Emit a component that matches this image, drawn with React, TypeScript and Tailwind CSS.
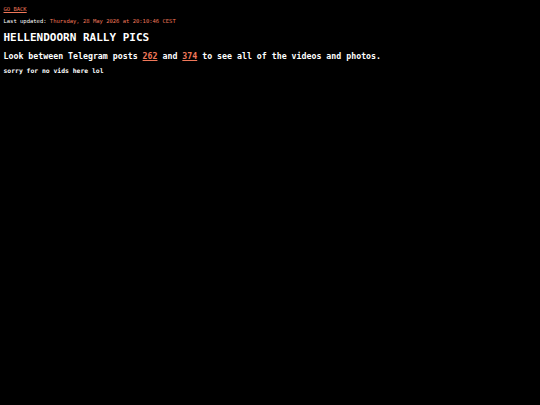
export default function App() {
  return (
    <div
      className="min-h-[405px] bg-black px-[3.5px] pt-[5.5px] text-[5.5px] text-white"
      style={{ fontFamily: '"DejaVu Sans Mono", monospace' }}
    >
      <a href="#" className="block w-fit text-[5.5px] leading-[7px] text-[#f0785a] underline">
        GO BACK
      </a>
      <p className="mt-[5px] text-[5.5px] leading-[7px]">
        Last updated: <span className="text-[#f0785a]">Thursday, 28 May 2026 at 20:10:46 CEST</span>
      </p>
      <h1 className="mt-[6.5px] text-[11px] font-bold leading-[14px]">HELLENDOORN RALLY PICS</h1>
      <p className="mt-[5.5px] text-[8.25px] font-bold leading-[11px]">
        Look between Telegram posts{' '}
        <a href="#" className="text-[#f0785a] underline">262</a> and{' '}
        <a href="#" className="text-[#f0785a] underline">374</a> to see all of the videos and photos.
      </p>
      <p className="mt-[5.5px] text-[6.4px] font-bold leading-[8px]">sorry for no vids here lol</p>
    </div>
  );
}
